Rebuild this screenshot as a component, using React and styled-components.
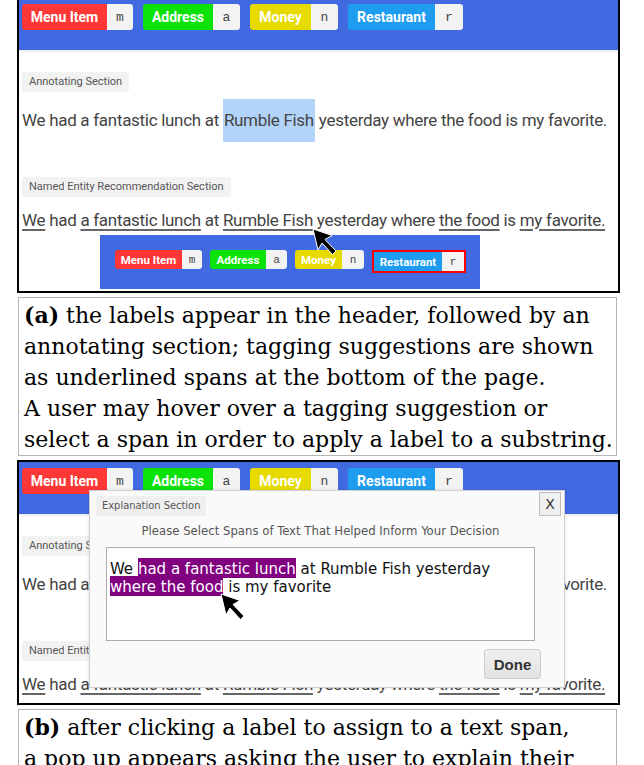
import React from "react";
import styled, { createGlobalStyle } from "styled-components";

const GlobalStyle = createGlobalStyle`
  html, body {
    margin: 0;
    padding: 0;
    background: #fff;
    overflow: hidden;
  }
  body {
    font-family: Roboto, "Liberation Sans", Arial, sans-serif;
  }
`;

const Figure = styled.div`
  width: 603px;
  margin-left: 17px;
  display: flex;
  flex-direction: column;
  gap: 4px;
`;

const Panel = styled.div`
  position: relative;
  box-sizing: border-box;
  width: 603px;
  border: 2px solid #000;
  overflow: hidden;
  margin-top: ${(p) => (p.$cropped ? "-4px" : "0")};
`;

const Header = styled.div`
  box-sizing: border-box;
  height: 52px;
  background: #4169e1;
  padding: 6px 0 0 3px;
  display: flex;
  align-items: flex-start;
  gap: 10px;
  box-shadow: 0 1px 2px rgba(0, 0, 0, 0.12);
`;

const Content = styled.div`
  display: flex;
  flex-direction: column;
  align-items: flex-start;
  padding: 22px 0 ${(p) => p.$bottom}px 3px;
`;

const Chip = styled.div`
  display: flex;
  height: ${(p) => (p.$small ? 19 : 26)}px;
  overflow: hidden;
  border: ${(p) => (p.$selected ? "2px solid #ff0000" : "none")};
  border-radius: ${(p) => (p.$selected ? "0" : "3px")};
`;

const ChipName = styled.span`
  width: ${(p) => p.$w}px;
  background: ${(p) => p.$color};
  color: #fff;
  font-family: Roboto, "Liberation Sans", sans-serif;
  font-weight: 700;
  font-size: ${(p) => (p.$small ? 11.5 : 14)}px;
  display: flex;
  align-items: center;
  justify-content: center;
  white-space: nowrap;
`;

const ChipKey = styled.span`
  width: ${(p) => p.$w}px;
  background: #f3f3f3;
  color: #444;
  font-family: "Liberation Mono", "Courier New", monospace;
  font-size: ${(p) => (p.$small ? 11 : 13)}px;
  display: flex;
  align-items: center;
  justify-content: center;
`;

const Badge = styled.div`
  box-sizing: border-box;
  height: 20px;
  line-height: 20px;
  padding: 0 7px;
  border-radius: 3px;
  background: #f2f2f2;
  color: #555;
  font-family: Roboto, "Liberation Sans", sans-serif;
  font-size: 11px;
  white-space: nowrap;
  margin-top: ${(p) => p.$top || 0}px;
`;

const Sentence = styled.p`
  margin: 7px 0 0;
  font-size: 17px;
  letter-spacing: -0.3px;
  line-height: 43px;
  color: #444;
  white-space: nowrap;
`;

const Highlight = styled.span`
  display: inline-block;
  line-height: 43px;
  background: #b3d4fa;
  padding: 0 1px;
`;

const Suggested = styled.p`
  margin: 10px 0 0;
  font-size: 17px;
  letter-spacing: -0.3px;
  line-height: 26px;
  color: #444;
  white-space: nowrap;
`;

const Under = styled.span`
  text-decoration: underline;
  text-decoration-color: #666;
  text-decoration-thickness: 2px;
  text-underline-offset: 3px;
`;

const Popover = styled.div`
  position: absolute;
  left: 81px;
  top: 237px;
  width: 380px;
  height: 54px;
  box-sizing: border-box;
  background: #4169e1;
  padding: 15px 0 0 15px;
  display: flex;
  align-items: flex-start;
  gap: 8px;
`;

const Pointer = styled.svg`
  position: absolute;
  left: ${(p) => p.$x}px;
  top: ${(p) => p.$y}px;
  z-index: 5;
`;

const Modal = styled.div`
  position: absolute;
  left: 70px;
  top: 28px;
  width: 476px;
  height: 198px;
  box-sizing: border-box;
  background: #fafafa;
  border: 1px solid #cfcfcf;
  box-shadow: 0 0 3px rgba(0, 0, 0, 0.12);
  padding: 5px 3px 0 6px;
  display: flex;
  flex-direction: column;
  font-family: "DejaVu Sans", Verdana, sans-serif;
`;

const ModalTop = styled.div`
  display: flex;
  justify-content: space-between;
  align-items: flex-start;
  height: 20px;
`;

const ModalBadge = styled.div`
  height: 20px;
  line-height: 20px;
  padding: 0 6px;
  border-radius: 3px;
  background: #efefef;
  color: #555;
  font-size: 11px;
  font-stretch: condensed;
  font-family: "DejaVu Sans Condensed", "DejaVu Sans", sans-serif;
`;

const CloseButton = styled.div`
  box-sizing: border-box;
  width: 22px;
  height: 24px;
  margin-top: -4px;
  border: 1px solid #bdbdbd;
  background: #efefef;
  color: #333;
  font-size: 14px;
  display: flex;
  align-items: center;
  justify-content: center;
`;

const ModalBody = styled.div`
  margin-left: 10px;
  width: 429px;
  display: flex;
  flex-direction: column;
`;

const Prompt = styled.div`
  margin: 7px 0 8px;
  text-align: center;
  font-family: "DejaVu Sans Condensed", "DejaVu Sans", sans-serif;
  font-stretch: condensed;
  font-size: 13px;
  line-height: 16px;
  color: #555;
  white-space: nowrap;
`;

const TextBox = styled.div`
  box-sizing: border-box;
  height: 94px;
  border: 1px solid #acacac;
  background: #fff;
  padding: 11px 3px;
  font-family: "DejaVu Sans Condensed", "DejaVu Sans", sans-serif;
  font-stretch: condensed;
  font-size: 16.7px;
  line-height: 18px;
  color: #111;
  white-space: nowrap;
`;

const Mark = styled.span`
  background: #800080;
  color: #fff;
`;

const DoneButton = styled.div`
  align-self: flex-end;
  margin: 8px -6px 0 0;
  box-sizing: border-box;
  width: 57px;
  height: 30px;
  border: 1px solid #cdcdcd;
  border-radius: 3px;
  background: linear-gradient(#f0f0f0, #e2e2e2);
  color: #333;
  font-family: "Liberation Sans", Arial, sans-serif;
  font-weight: 700;
  font-size: 15px;
  display: flex;
  align-items: center;
  justify-content: center;
`;

const Caption = styled.div`
  box-sizing: border-box;
  width: 599px;
  margin-left: 1px;
  border: 1px solid #b5b5b5;
  padding: 2px 5px 0;
  font-family: "DejaVu Serif", "Liberation Serif", serif;
  font-size: 22px;
  line-height: 31px;
  color: #000;
  white-space: nowrap;
`;

const labels = [
  { name: "Menu Item", key: "m", color: "#fd3636", w: 85, kw: 26, sw: 67, skw: 20 },
  { name: "Address", key: "a", color: "#0ae20a", w: 70, kw: 27, sw: 56, skw: 21 },
  { name: "Money", key: "n", color: "#e6da00", w: 61, kw: 27, sw: 47, skw: 22 },
  { name: "Restaurant", key: "r", color: "#1e9cf0", w: 87, kw: 28, sw: 68, skw: 22 },
];

function Cursor({ x, y }) {
  return (
    <Pointer $x={x} $y={y} width="26" height="28" viewBox="0 0 26 28">
      <polygon
        points="1,1 20,7.5 13,11.5 24,23 20.5,26.5 10,15 6,22"
        fill="#000"
        stroke="#fff"
        strokeWidth="1"
        strokeLinejoin="round"
      />
    </Pointer>
  );
}

function LabelBar({ small }) {
  return labels.map((l) => (
    <Chip key={l.key} $small={small} $selected={small && l.key === "r"}>
      <ChipName $color={l.color} $small={small} $w={small ? l.sw : l.w}>
        {l.name}
      </ChipName>
      <ChipKey $small={small} $w={small ? l.skw : l.kw}>
        {l.key}
      </ChipKey>
    </Chip>
  ));
}

function PageBody({ bottom }) {
  return (
    <Content $bottom={bottom}>
      <Badge>Annotating Section</Badge>
      <Sentence>
        We had a fantastic lunch at <Highlight>Rumble Fish</Highlight> yesterday where the food is my favorite.
      </Sentence>
      <Badge $top={35}>Named Entity Recommendation Section</Badge>
      <Suggested>
        <Under>We</Under> had <Under>a fantastic lunch</Under> at <Under>Rumble Fish</Under> yesterday where{" "}
        <Under>the food</Under> is <Under>my favorite.</Under>
      </Suggested>
    </Content>
  );
}

export default function App() {
  return (
    <>
      <GlobalStyle />
      <Figure>
        <Panel $cropped>
          <Header>
            <LabelBar />
          </Header>
          <PageBody bottom={58} />
          <Popover>
            <LabelBar small />
          </Popover>
          <Cursor x={293} y={230} />
        </Panel>

        <Caption>
          <b>(a)</b> the labels appear in the header, followed by an
          <br />
          annotating section; tagging suggestions are shown
          <br />
          as underlined spans at the bottom of the page.
          <br />
          A user may hover over a tagging suggestion or
          <br />
          select a span in order to apply a label to a substring.
        </Caption>

        <Panel>
          <Header>
            <LabelBar />
          </Header>
          <PageBody bottom={6} />
          <Modal>
            <ModalTop>
              <ModalBadge>Explanation Section</ModalBadge>
              <CloseButton>X</CloseButton>
            </ModalTop>
            <ModalBody>
              <Prompt>Please Select Spans of Text That Helped Inform Your Decision</Prompt>
              <TextBox>
                We <Mark>had a fantastic lunch</Mark> at Rumble Fish yesterday
                <br />
                <Mark>where the food</Mark> is my favorite
              </TextBox>
              <DoneButton>Done</DoneButton>
            </ModalBody>
          </Modal>
          <Cursor x={201} y={131} />
        </Panel>

        <Caption>
          <b>(b)</b> after clicking a label to assign to a text span,
          <br />
          a pop up appears asking the user to explain their
        </Caption>
      </Figure>
    </>
  );
}
